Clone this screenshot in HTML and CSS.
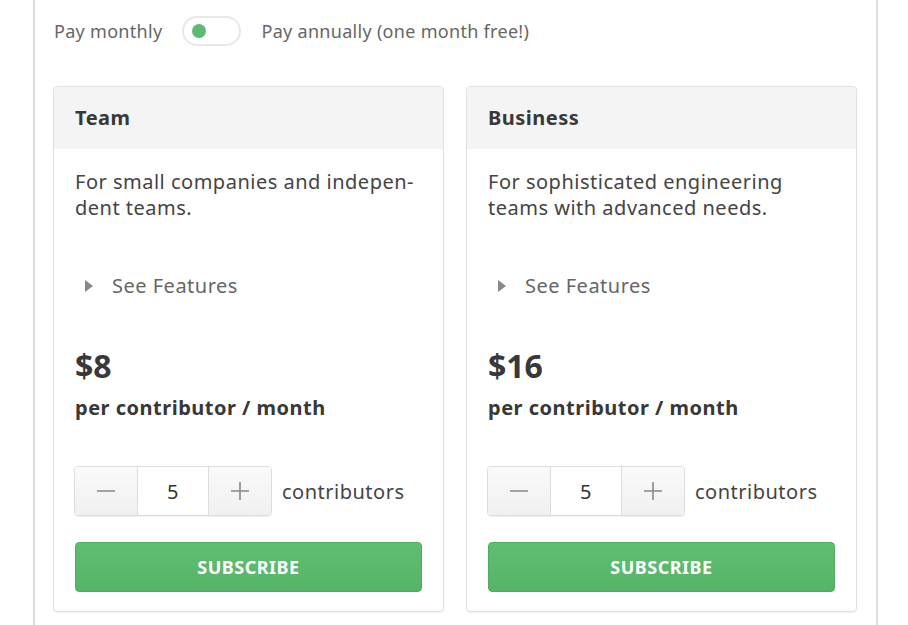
FILE: index.html
```html
<!DOCTYPE html>
<html lang="en">
<head>
    <meta charset="UTF-8">
    <title>Plans</title>
    <link rel="stylesheet" href="styles.css">
</head>
<body>
    <div class="pricing">
        <!-- Billing period switch -->
        <div class="billing">
            <span>Pay monthly</span>
            <span class="switch"><span class="knob"></span></span>
            <span>Pay annually (one month free!)</span>
        </div>

        <div class="plans">
            <div class="plan">
                <div class="plan-head">Team</div>
                <div class="plan-body">
                    <p class="plan-desc">For small companies and indepen&shy;dent teams.</p>
                    <div class="features"><span class="arrow"></span>See Features</div>
                    <div class="price">$8</div>
                    <div class="per">per contributor / month</div>
                    <div class="seats">
                        <div class="stepper">
                            <button class="step"><svg width="18" height="18" viewBox="0 0 18 18"><path d="M0 9h18" stroke="#888" stroke-width="1.6"/></svg></button>
                            <div class="count">5</div>
                            <button class="step"><svg width="18" height="18" viewBox="0 0 18 18"><path d="M0 9h18M9 0v18" stroke="#888" stroke-width="1.6"/></svg></button>
                        </div>
                        <span class="seats-label">contributors</span>
                    </div>
                    <button class="subscribe">Subscribe</button>
                </div>
            </div>

            <div class="plan">
                <div class="plan-head">Business</div>
                <div class="plan-body">
                    <p class="plan-desc">For sophisticated engineering teams with advanced needs.</p>
                    <div class="features"><span class="arrow"></span>See Features</div>
                    <div class="price">$16</div>
                    <div class="per">per contributor / month</div>
                    <div class="seats">
                        <div class="stepper">
                            <button class="step"><svg width="18" height="18" viewBox="0 0 18 18"><path d="M0 9h18" stroke="#888" stroke-width="1.6"/></svg></button>
                            <div class="count">5</div>
                            <button class="step"><svg width="18" height="18" viewBox="0 0 18 18"><path d="M0 9h18M9 0v18" stroke="#888" stroke-width="1.6"/></svg></button>
                        </div>
                        <span class="seats-label">contributors</span>
                    </div>
                    <button class="subscribe">Subscribe</button>
                </div>
            </div>
        </div>
    </div>
</body>
</html>
```

FILE: styles.css
```css
body {
    font-family: 'Noto Sans', 'Open Sans', sans-serif;
    letter-spacing: 0.5px;
    background-color: white;
    margin: 0;
    color: #333;
}

.pricing {
    margin-left: 33px;
    padding: 16px 19px 0 18px;
    box-sizing: border-box;
    width: 845px;
    height: 625px;
    border-left: 2px solid #ddd;
    border-right: 2px solid #ddd;
}

/* Billing switch */
.billing {
    display: flex;
    align-items: center;
    height: 30px;
    font-size: 18px;
    letter-spacing: 0.3px;
    color: #666;
    padding-left: 1px;
}

.switch {
    position: relative;
    width: 55px;
    height: 26px;
    margin: 0 20px;
    border: 2px solid #e8e8e8;
    border-radius: 15px;
    background-color: white;
}

.knob {
    position: absolute;
    left: 8px;
    top: 6px;
    width: 14px;
    height: 14px;
    border-radius: 50%;
    background-color: #5cbb70;
}

/* Plan cards */
.plans {
    display: grid;
    grid-template-columns: 1fr 1fr;
    gap: 22px;
    margin-top: 40px;
}

.plan {
    border: 1px solid #e0e0e0;
    border-radius: 4px;
    box-shadow: 0 1px 1px rgba(0, 0, 0, 0.06);
    overflow: hidden;
}

.plan-head {
    background-color: #f4f4f4;
    padding: 18px 21px;
    font-size: 20px;
    line-height: 26px;
    font-weight: bold;
    color: #383838;
}

.plan-body {
    padding: 20px 21px 19px;
}

.plan-desc {
    margin: 0;
    font-size: 20px;
    line-height: 26px;
    color: #444;
    height: 52px;
}

.features {
    margin-top: 52px;
    font-size: 20px;
    line-height: 26px;
    color: #666;
    display: flex;
    align-items: center;
    padding-left: 10px;
}

.arrow {
    width: 0;
    height: 0;
    border-left: 8px solid #888;
    border-top: 6px solid transparent;
    border-bottom: 6px solid transparent;
    margin-right: 19px;
}

.price {
    margin-top: 47px;
    font-size: 32px;
    line-height: 40px;
    font-weight: bold;
    letter-spacing: 0;
    color: #383838;
}

.per {
    margin-top: 9px;
    font-size: 20px;
    line-height: 26px;
    font-weight: bold;
    color: #383838;
}

/* Contributor count */
.seats {
    display: flex;
    align-items: center;
    margin-top: 45px;
}

.stepper {
    display: flex;
    height: 50px;
    margin-left: -1px;
    border: 1px solid #ddd;
    border-radius: 4px;
    box-shadow: 0 1px 1px rgba(0, 0, 0, 0.06);
    overflow: hidden;
    box-sizing: border-box;
}

.step {
    width: 62px;
    border: none;
    padding: 0;
    display: flex;
    align-items: center;
    justify-content: center;
    background: linear-gradient(#fafafa, #f0f0f0);
    cursor: pointer;
}

.count {
    width: 70px;
    border-left: 1px solid #ddd;
    border-right: 1px solid #ddd;
    background-color: white;
    display: flex;
    align-items: center;
    justify-content: center;
    font-size: 20px;
    color: #333;
}

.seats-label {
    margin-left: 10px;
    font-size: 20px;
    color: #444;
}

.subscribe {
    display: block;
    width: 100%;
    height: 50px;
    margin-top: 26px;
    border: 1px solid #4fab62;
    border-radius: 4px;
    background: linear-gradient(#5fbe72, #55b468);
    color: white;
    font-family: inherit;
    font-size: 18px;
    font-weight: bold;
    letter-spacing: 0.5px;
    text-transform: uppercase;
    cursor: pointer;
}
```
